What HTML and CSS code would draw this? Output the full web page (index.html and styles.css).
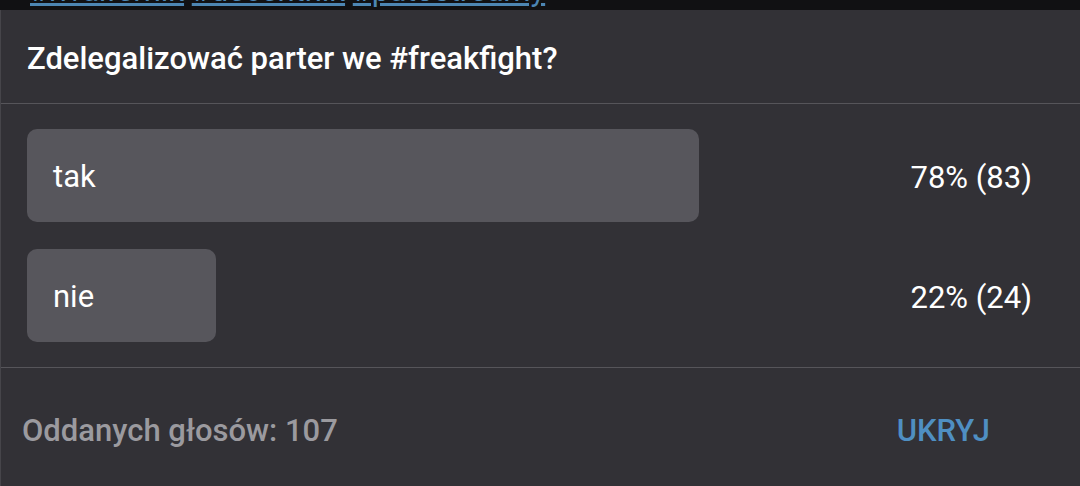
FILE: index.html
```html
<!DOCTYPE html>
<html lang="pl">
<head>
<meta charset="utf-8">
<link rel="stylesheet" href="styles.css">
</head>
<body>
<div class="tags">
  <div class="tags-inner"><a href="#">#rivalfernik</a> <a href="#">#decentnik</a> <a href="#">#patostreamy</a></div>
</div>
<section class="poll">
  <h2 class="poll-title">Zdelegalizować parter we #freakfight?</h2>
  <div class="options">
    <div class="option">
      <div class="track"><div class="bar" style="width:78%"><span class="label">tak</span></div></div>
      <div class="result">78% (83)</div>
    </div>
    <div class="option">
      <div class="track"><div class="bar" style="width:22%"><span class="label">nie</span></div></div>
      <div class="result">22% (24)</div>
    </div>
  </div>
  <footer class="poll-footer">
    <span class="votes">Oddanych głosów: 107</span>
    <span class="hide">UKRYJ</span>
  </footer>
</section>
</body>
</html>
```

FILE: styles.css
```css
html, body {
  margin: 0;
  padding: 0;
  background: #323136;
  font-family: Roboto, "Noto Sans", sans-serif;
}
.tags {
  height: 10px;
  overflow: hidden;
  background: #111113;
  padding-left: 30px;
}
.tags-inner {
  margin-top: -26px;
  font-size: 31px;
  line-height: 34px;
  white-space: nowrap;
}
.tags-inner a {
  color: #4d86b3;
  text-decoration: underline;
}
.poll {
  background: #323136;
  border-left: 1px solid #46454a;
  height: 476px;
}
.poll-title {
  margin: 0;
  padding: 3px 27px 0 26px;
  box-sizing: border-box;
  height: 94px;
  display: flex;
  align-items: center;
  font-size: 31px;
  font-weight: 500;
  color: #ffffff;
  border-bottom: 1px solid #56555a;
}
.options {
  padding: 25px 48px 25px 26px;
  display: flex;
  flex-direction: column;
  gap: 27px;
  border-bottom: 1px solid #56555a;
}
.option {
  display: flex;
  align-items: center;
}
.track {
  width: 861px;
}
.bar {
  height: 93px;
  background: #57565c;
  border-radius: 10px;
  display: flex;
  align-items: center;
  box-sizing: border-box;
  padding-left: 26px;
  padding-top: 2px;
}
.label {
  color: #ffffff;
  font-size: 31px;
}
.result {
  margin-left: auto;
  color: #ffffff;
  font-size: 31px;
  padding-top: 4px;
}
.poll-footer {
  display: flex;
  align-items: center;
  height: 124px;
  padding: 0 90px 0 21px;
  font-size: 31px;
  font-weight: 500;
}
.votes {
  color: #9b9a9f;
}
.hide {
  margin-left: auto;
  color: #4f8fc2;
}
```
